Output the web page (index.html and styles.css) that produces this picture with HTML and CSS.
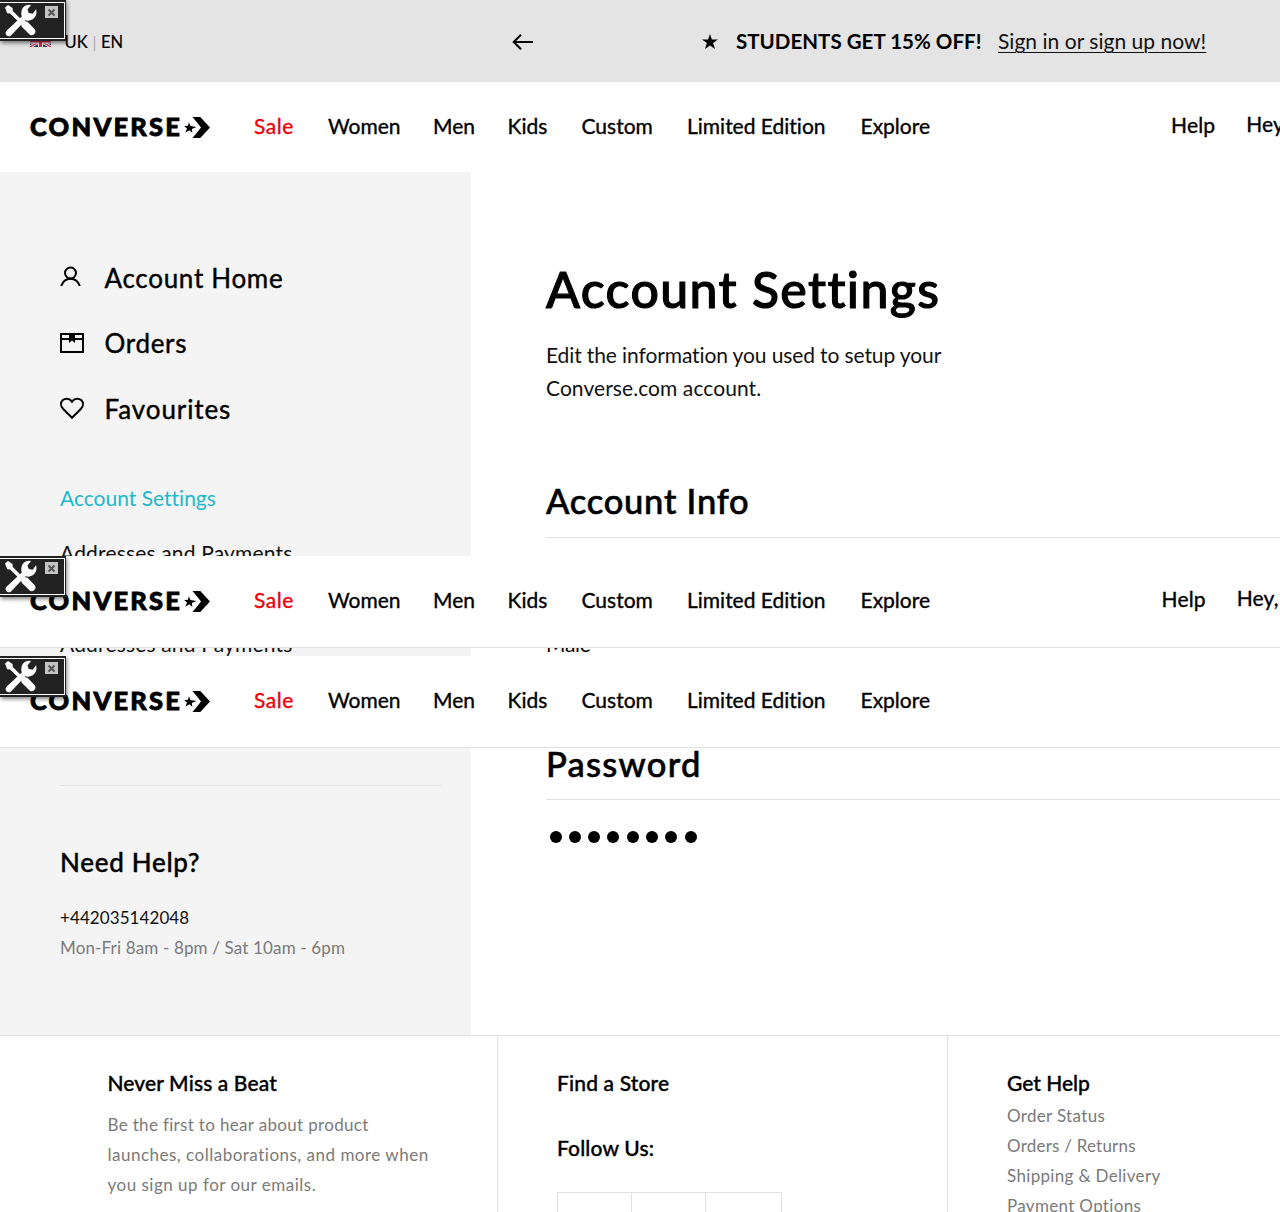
FILE: index.html
```
<!DOCTYPE html>
<html lang="en">
<head>
<meta charset="utf-8">
<title>Account Settings</title>
<link rel="stylesheet" href="styles.css">
</head>
<body>
<svg class="defs" width="0" height="0" aria-hidden="true">
  <symbol id="logo" viewBox="0 0 182 24">
    <text class="logo-text" transform="translate(0 21) scale(1.060 1)" x="0" y="0" textLength="141.500">CONVERSE</text>
    <path d="M162.500 2h7.800l9.700 10.500-9.700 10.500h-7.800l6.200-7.600 2.300-2.900-2.300-3z"/>
    <path d="M158.800 7.300l1.700 3.600 6 1-4.700 2 .6 4-3-2.700-4 2.300 1.600-4-2.800-2.400 3.800-.3z"/>
  </symbol>
  <symbol id="tools" viewBox="0 0 34 34">
    <path d="M1 3.500L4 1l4.500 3 .3 3 9 9-2.600 2.600-9-9-3-.3z"/>
    <path d="M17 20.500l3.500-3.500 3 .8 7.400 7.600c1 1.300 .8 3-.6 4.600s-3.500 1.700-4.700.5L18 23z"/>
    <path d="M2.500 26.800L17.800 12.500c-1.400-4.500.2-9.500 4.400-11.200 1.600-.7 3.300-.8 4.800-.4l-3.500 4.600 1.200 3.600 4 .7 3.300-4.500c1.400 4.300-.3 8.400-3.800 10.300-2.200 1.200-4.600 1.300-6.700.6L7 31.400c-1.300 1.200-3.300 1.100-4.500-.1s-1.200-3.300 0-4.500z"/>
  </symbol>
</svg>

<section class="view view-top">
  <div class="devtool"><div class="devtool-frame"><svg class="devtool-icon" width="34" height="34"><use href="#tools"/></svg><span class="devtool-close"><svg width="9" height="9" viewBox="0 0 9 9"><path d="M1.500 1.500l6 6M7.500 1.500l-6 6"/></svg></span></div></div>
  <div class="promo">
    <div class="locale">
      <svg class="flag" width="21" height="12" viewBox="0 0 21 12"><path fill="#283868" d="M0 0h21v12H0z"/><path stroke="#fff" stroke-width="3" d="M0 0l21 12M21 0L0 12"/><path stroke="#d0304a" stroke-width="1.400" d="M0 0l21 12M21 0L0 12"/><path stroke="#fff" stroke-width="5" d="M10.500 0v12M0 6h21"/><path stroke="#d0304a" stroke-width="3" d="M10.500 0v12M0 6h21"/></svg>
      <span class="country">UK</span><span class="bar">|</span><span>EN</span>
    </div>
    <svg class="back" width="22" height="16" viewBox="0 0 22 16"><path d="M21 8H1.500M9 .8L1.700 8 9 15.200"/></svg>
    <svg class="star" width="16" height="15" viewBox="0 0 16 15"><path d="M8 0l1.900 5.500H16l-4.900 3.600L13 15l-5-3.600L3 15l1.900-5.900L0 5.500h6.100z"/></svg>
    <strong class="offer">STUDENTS GET 15% OFF!</strong>
    <a class="signin">Sign in or sign up now!</a>
  </div>
  <header class="nav">
    <svg class="logo" width="182" height="24"><use href="#logo"/></svg>
    <nav class="links"><a class="sale">Sale</a><a>Women</a><a>Men</a><a>Kids</a><a>Custom</a><a>Limited Edition</a><a>Explore</a></nav>
    <div class="user"><a>Help</a><a class="hey">Hey,</a></div>
  </header>
  <div class="body">
    <aside class="side">
      <ul class="menu">
        <li><svg width="24" height="24" viewBox="0 0 24 24"><circle cx="10.500" cy="8" r="5.500"/><path d="M1.200 21c1.500-4.500 5-7.300 9.300-7.300s7.800 2.800 9.300 7.300"/></svg><span>Account Home</span></li>
        <li><svg width="24" height="24" viewBox="0 0 24 24"><path d="M1 4h22v18H1zM1 9h22"/><path class="solid" d="M9 4h6v9l-3-2.500L9 13z"/></svg><span>Orders</span></li>
        <li><svg width="24" height="24" viewBox="0 0 24 24"><path d="M12 21.800L3.200 13C.5 10.200.4 6.500 2.600 4.300s6-2.200 8.100 0L12 5.800l1.300-1.500c2.100-2.200 5.900-2.200 8.100 0s2.100 5.900-.6 8.700z"/></svg><span class="fav">Favourites</span></li>
      </ul>
      <ul class="submenu"><li class="current">Account Settings</li><li class="addresses">Addresses and Payments</li></ul>
    </aside>
    <main class="main">
      <h1>Account Settings</h1>
      <p class="intro"><span class="tight">Edit the information you used to setup your</span><br>Converse.com account.</p>
      <h2 class="info">Account Info</h2>
    </main>
  </div>
</section>

<section class="view view-mid">
  <div class="devtool"><div class="devtool-frame"><svg class="devtool-icon" width="34" height="34"><use href="#tools"/></svg><span class="devtool-close"><svg width="9" height="9" viewBox="0 0 9 9"><path d="M1.500 1.500l6 6M7.500 1.500l-6 6"/></svg></span></div></div>
  <header class="nav stuck">
    <svg class="logo" width="182" height="24"><use href="#logo"/></svg>
    <nav class="links"><a class="sale">Sale</a><a>Women</a><a>Men</a><a>Kids</a><a>Custom</a><a>Limited Edition</a><a>Explore</a></nav>
    <div class="user"><a>Help</a><a class="hey">Hey,</a></div>
  </header>
  <div class="body">
    <aside class="side"><div class="addresses">Addresses and Payments</div></aside>
    <main class="main"><p class="gender">Male</p></main>
  </div>
</section>

<section class="view view-end">
  <div class="devtool"><div class="devtool-frame"><svg class="devtool-icon" width="34" height="34"><use href="#tools"/></svg><span class="devtool-close"><svg width="9" height="9" viewBox="0 0 9 9"><path d="M1.500 1.500l6 6M7.500 1.500l-6 6"/></svg></span></div></div>
  <header class="nav stuck">
    <svg class="logo" width="182" height="24"><use href="#logo"/></svg>
    <nav class="links"><a class="sale">Sale</a><a>Women</a><a>Men</a><a>Kids</a><a>Custom</a><a>Limited Edition</a><a>Explore</a></nav>
  </header>
  <div class="body">
    <aside class="side">
      <hr>
      <h3>Need Help?</h3>
      <p class="phone">+442035142048</p>
      <p class="hours">Mon-Fri 8am - 8pm / Sat 10am - 6pm</p>
    </aside>
    <main class="main">
      <h2 class="password">Password</h2>
      <div class="mask"><i></i><i></i><i></i><i></i><i></i><i></i><i></i><i></i></div>
    </main>
  </div>
  <footer class="footer">
    <div class="col">
      <h4 class="beat">Never Miss a Beat</h4>
      <p>Be the first to hear about product<br><span class="loose">launches, collaborations, and more when<br>you sign up for our emails.</span></p>
    </div>
    <div class="col">
      <h4 class="store">Find a Store</h4>
      <h4 class="follow">Follow Us:</h4>
      <div class="social"><span></span><span></span><span></span></div>
    </div>
    <div class="col">
      <h4>Get Help</h4>
      <ul><li>Order Status</li><li class="returns">Orders / Returns</li><li>Shipping &amp; Delivery</li><li>Payment Options</li></ul>
    </div>
  </footer>
</section>
</body>
</html>
```
FILE: styles.css
```
* { box-sizing: border-box; margin: 0; padding: 0; }
html, body { width: 1280px; height: 1212px; overflow: hidden; }
body { background: #fff; color: #000; font: 400 21px/25px Lato, "Open Sans", sans-serif; font-variant-ligatures: none; }
ul { list-style: none; }
svg { display: block; flex: none; }
.defs { position: absolute; }

.view { position: relative; display: flex; flex-direction: column; overflow: hidden; }
.view-top { height: 556px; }
.view-mid { height: 100px; }
.view-end { height: 556px; }

/* floating developer badge */
.devtool { position: absolute; z-index: 2; left: 0; top: 0; width: 66px; height: 41px; padding: 2px 1px 2px 0; background: #222; box-shadow: 1px 2px 4px rgba(0,0,0,.5); }
.devtool-frame { position: relative; height: 37px; border: solid #fff; border-width: 1px 1px 1px 0; }
.devtool-icon { position: absolute; left: 4px; top: 1px; fill: #fff; }
.devtool-close { position: absolute; left: 45px; top: 3px; width: 13px; height: 12px; padding: 1.5px 2px; background: #c4c4c4; }
.devtool-close path { stroke: #555; stroke-width: 2; }

.promo { display: flex; align-items: center; flex: none; height: 82px; padding-left: 30px; background: #e4e4e4; }
.locale { display: flex; align-items: center; width: 482px; padding-top: 3px; font-size: 16.5px; -webkit-text-stroke: .2px; }
.flag { margin-top: -4px; margin-right: 13.5px; }
.country { width: 28px; }
.bar { width: 8.5px; color: #999; font-weight: 300; }
.back { width: 22px; margin: 1px 168px 0 0; fill: none; stroke: #000; stroke-width: 2; }
.star { margin-right: 18px; }
.offer { width: 262px; font-size: 20.5px; letter-spacing: .03px; }
.signin { margin-top: -1px; color: #111; letter-spacing: .03px; text-decoration: underline; text-decoration-thickness: 1px; text-underline-offset: 3px; }

.nav { display: flex; align-items: center; flex: none; height: 90px; padding-left: 30px; background: #fff; }
.stuck { height: 92px; padding-bottom: 1px; border-bottom: 1px solid #e1e1e1; }
.logo-text { font: 900 24px Lato, sans-serif; stroke: #000; stroke-width: .8px; }
.links { display: grid; grid-template-columns: 74px 105px 74.5px 74px 105.5px 173.5px auto; margin-left: 42px; padding-bottom: 4px; -webkit-text-stroke: .35px; }
.sale { color: #ee0005; letter-spacing: .5px; }
.user { display: flex; margin-left: 241px; padding-bottom: 5px; letter-spacing: .15px; -webkit-text-stroke: .35px; }
.stuck .user { margin-left: 231.5px; }
.hey { margin: -1px 0 1px 31px; }

.body { display: flex; flex: 1; min-height: 0; overflow: hidden; }
.side { flex: none; width: 471px; padding: 0 30px 0 60px; background: #f4f4f4; }
.main { flex: 1; padding-left: 75px; }

.menu { padding-top: 72px; font-size: 26px; letter-spacing: .7px; -webkit-text-stroke: .4px; }
.menu li { display: flex; align-items: center; gap: 20.5px; height: 65.5px; }
.menu span { padding-top: 2.5px; }
.menu svg { fill: none; stroke: #000; stroke-width: 2; }
.menu .solid { fill: #000; stroke: none; }
.menu .fav { letter-spacing: .9px; }
.submenu { padding-top: 29px; }
.submenu li { line-height: 55px; }
.current { color: #1eb8cd; }
.addresses { color: #111; letter-spacing: .17px; }
.view-mid .addresses { margin-top: -32px; line-height: 55px; }

.view-top .main { padding-top: 87px; }
h1 { font-size: 50px; line-height: 60px; font-weight: 500; letter-spacing: 1.35px; -webkit-text-stroke: 1.1px; }
.intro { margin-top: 19px; color: #111; line-height: 33px; letter-spacing: .07px; }
.tight { letter-spacing: -.11px; }
h2 { padding-bottom: 14px; border-bottom: 1px solid #e1e1e1; font-size: 34.5px; line-height: 45px; font-weight: 500; letter-spacing: .75px; -webkit-text-stroke: .6px; }
.info { margin-top: 74px; }
.gender { margin-top: -19px; letter-spacing: -.3px; line-height: 30px; }

.view-end .side hr { height: 1px; margin-top: 37px; border: 0; background: #e1e1e1; }
h3 { margin-top: 56px; font-size: 26px; line-height: 40px; font-weight: 500; letter-spacing: .7px; -webkit-text-stroke: .4px; }
.phone, .hours { font-size: 17px; line-height: 30px; }
.phone { margin-top: 21px; color: #111; letter-spacing: .08px; }
.hours { color: #7a7a7a; letter-spacing: .15px; }
.password { margin-top: -7px; padding-bottom: 13px; letter-spacing: 1.25px; }
.mask { display: flex; gap: 7.3px; padding: 31px 0 0 3.5px; }
.mask i { width: 12px; height: 12px; border-radius: 50%; background: #000; }

.footer { display: grid; grid-template-columns: 498px 450px 1fr; flex: none; height: 177px; border-top: 1px solid #e1e1e1; }
.col { padding: 34px 0 0 59px; border-right: 1px solid #e1e1e1; }
.col:first-child { padding-left: 107.5px; }
.col:last-child { border: 0; }
h4 { font-size: 21px; line-height: 25px; font-weight: 500; -webkit-text-stroke: .35px; }
.col p, .col li { color: #7a7a7a; font-size: 17px; line-height: 30px; letter-spacing: .33px; }
.col p { margin-top: 15px; }
.col ul { margin-top: 6px; }
.col .loose { letter-spacing: .5px; }
.col .returns { letter-spacing: .22px; }
.beat { letter-spacing: .12px; }
.store { letter-spacing: .15px; }
.follow { margin-top: 40px; letter-spacing: .15px; }
.social { display: flex; width: 225px; height: 75px; margin-top: 32px; border: 1px solid #e1e1e1; }
.social span { width: 75px; border-right: 1px solid #e1e1e1; }
.social span:first-child { width: 74px; }
.social span:last-child { border: 0; }
```
